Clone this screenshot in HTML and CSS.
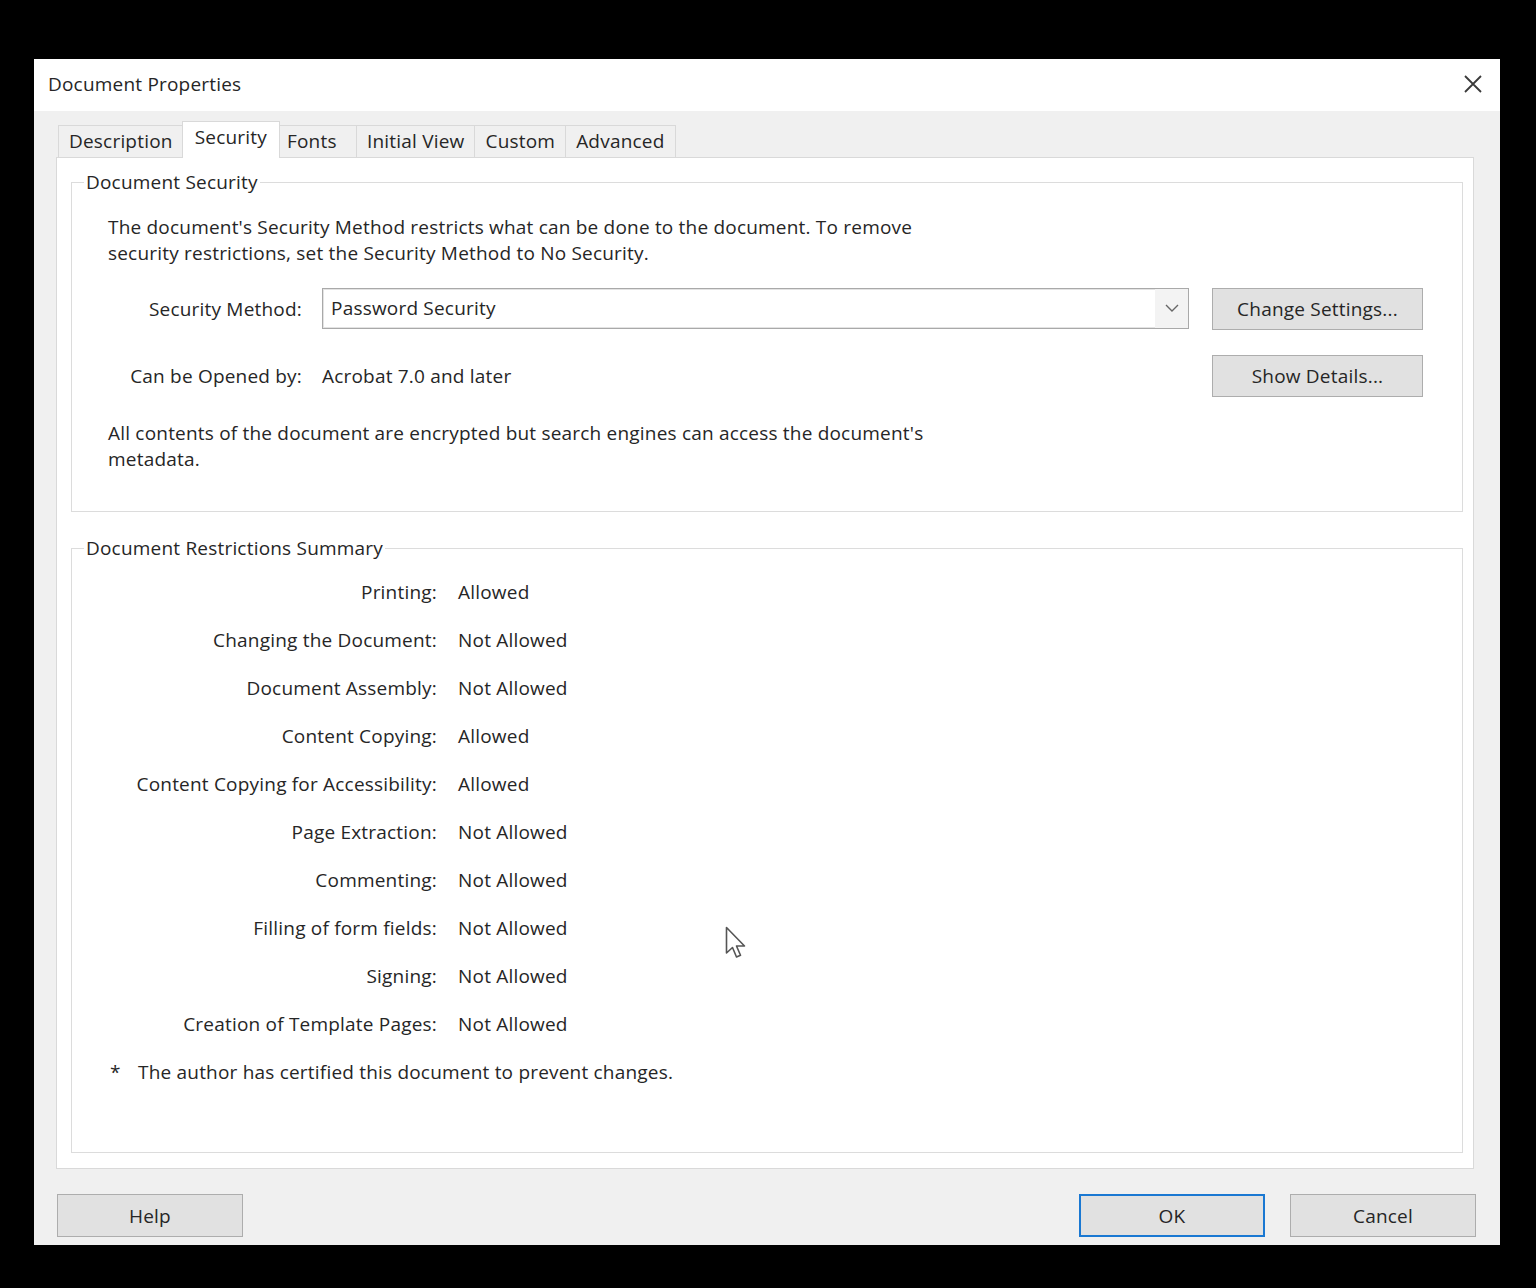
FILE: index.html
```html
<!DOCTYPE html>
<html>
<head>
<meta charset="utf-8">
<title>Document Properties</title>
<link rel="stylesheet" href="styles.css">
</head>
<body>
<div class="dialog">
  <div class="titlebar">
    <span class="title">Document Properties</span>
    <svg class="close" width="20" height="20" viewBox="0 0 20 20"><path d="M2 2 L18 18 M18 2 L2 18" stroke="#3a3a3a" stroke-width="1.8" fill="none"/></svg>
  </div>
  <div class="body">
    <div class="tabs">
      <div class="tab">Description</div>
      <div class="tab active">Security</div>
      <div class="tab fonts">Fonts</div>
      <div class="tab">Initial View</div>
      <div class="tab">Custom</div>
      <div class="tab">Advanced</div>
    </div>
    <div class="panel">
      <fieldset class="group">
        <legend>Document Security</legend>
        <div class="group-inner sec">
          <p class="para">The document's Security Method restricts what can be done to the document. To remove<br>security restrictions, set the Security Method to No Security.</p>
          <div class="row row-method">
            <span class="lbl">Security Method:</span>
            <div class="select">
              <span class="select-text">Password Security</span>
              <span class="select-arrow"><svg width="14" height="8" viewBox="0 0 14 8"><path d="M1 1 L7 7 L13 1" stroke="#666" stroke-width="1.4" fill="none"/></svg></span>
            </div>
            <button class="btn side">Change Settings...</button>
          </div>
          <div class="row row-open">
            <span class="lbl">Can be Opened by:</span>
            <span class="val">Acrobat 7.0 and later</span>
            <button class="btn side">Show Details...</button>
          </div>
          <p class="para para2">All contents of the document are encrypted but search engines can access the document's<br>metadata.</p>
        </div>
      </fieldset>
      <fieldset class="group group2">
        <legend>Document Restrictions Summary</legend>
        <div class="group-inner restr">
          <div class="rrow"><span class="rl">Printing:</span><span class="rv">Allowed</span></div>
          <div class="rrow"><span class="rl">Changing the Document:</span><span class="rv">Not Allowed</span></div>
          <div class="rrow"><span class="rl">Document Assembly:</span><span class="rv">Not Allowed</span></div>
          <div class="rrow"><span class="rl">Content Copying:</span><span class="rv">Allowed</span></div>
          <div class="rrow"><span class="rl">Content Copying for Accessibility:</span><span class="rv">Allowed</span></div>
          <div class="rrow"><span class="rl">Page Extraction:</span><span class="rv">Not Allowed</span></div>
          <div class="rrow"><span class="rl">Commenting:</span><span class="rv">Not Allowed</span></div>
          <div class="rrow"><span class="rl">Filling of form fields:</span><span class="rv">Not Allowed</span></div>
          <div class="rrow"><span class="rl">Signing:</span><span class="rv">Not Allowed</span></div>
          <div class="rrow"><span class="rl">Creation of Template Pages:</span><span class="rv">Not Allowed</span></div>
          <div class="note"><span class="star">*</span><span>The author has certified this document to prevent changes.</span></div>
        </div>
      </fieldset>
    </div>
    <div class="footer">
      <button class="btn foot help">Help</button>
      <div class="footer-right">
        <button class="btn foot ok">OK</button>
        <button class="btn foot">Cancel</button>
      </div>
    </div>
  </div>
</div>
<svg class="cursor" width="26" height="36" viewBox="0 0 26 36"><path d="M1.5 1.5 L1.5 27 L7.5 21.5 L11.5 31 L15.5 29.3 L11.5 20 L19.5 20 Z" fill="#fff" stroke="#555" stroke-width="1.6" stroke-linejoin="round"/></svg>
</body>
</html>
```
FILE: styles.css
```css
* { box-sizing: border-box; }
html, body { margin: 0; padding: 0; }
body {
  background: #000;
  width: 1536px;
  height: 1288px;
  overflow: hidden;
  font-family: "Open Sans", "Noto Sans", sans-serif;
  font-size: 19px;
  letter-spacing: 0.2px;
  color: #262626;
  padding: 59px 0 0 34px;
  position: relative;
}
.dialog {
  width: 1466px;
  height: 1186px;
  background: #f0f0f0;
  display: flex;
  flex-direction: column;
}
.titlebar {
  height: 52px;
  background: #fff;
  display: flex;
  align-items: center;
  justify-content: space-between;
  padding: 0 17px 0 14px;
}
.title { padding-bottom: 2px; }
.close { display: block; margin-top: -2px; }
.body {
  flex: 1;
  display: flex;
  flex-direction: column;
  padding: 10px 26px 0 22px;
}
.tabs {
  display: flex;
  align-items: flex-end;
  height: 36px;
  padding-left: 2px;
  position: relative;
  z-index: 2;
}
.tab {
  height: 32px;
  line-height: 30px;
  padding: 0 10px;
  border: 1px solid #d9d9d9;
  border-bottom: none;
  border-left: none;
  background: #f0f0f0;
}
.tab:first-child { border-left: 1px solid #d9d9d9; }
.tab.fonts { min-width: 79px; padding-left: 9px; }
.tab.active {
  background: #fff;
  border-left: 1px solid #d9d9d9;
  margin: 0 -2px -1px -2px;
  padding: 0 12px;
  height: 37px;
  line-height: 30px;
  position: relative;
}
.panel {
  background: #fff;
  border: 1px solid #d9d9d9;
  height: 1012px;
  padding: 12px 10px 0 14px;
}
.group {
  margin: 0;
  padding: 0;
  border: 1px solid #dcdcdc;
  min-width: 0;
}
.group legend {
  margin-left: 12px;
  padding: 0 2px;
  line-height: 24px;
  height: 24px;
}
.group-inner.sec { padding: 20px 39px 39px 36px; }
.para { margin: 0; line-height: 26px; }
.row { display: flex; align-items: center; }
.row-method { margin-top: 22px; height: 42px; }
.row-open { margin-top: 24px; height: 43px; }
.lbl { width: 194px; text-align: right; margin-right: 20px; flex: none; }
.select {
  flex: 1;
  height: 41px;
  border: 1px solid #a9a9a9;
  box-shadow: inset 0 0 0 1px #e3e3e3;
  background: #fff;
  display: flex;
  align-items: center;
  margin-top: -2px;
}
.select-text { flex: 1; padding-left: 8px; }
.select-arrow {
  width: 33px;
  height: 100%;
  background: #f3f3f3;
  display: flex;
  align-items: center;
  justify-content: center;
}
.select-arrow svg { display: block; }
.val { flex: 1; }
.btn {
  font-family: inherit;
  font-size: 19px;
  letter-spacing: 0.2px;
  color: #262626;
  background: #e1e1e1;
  border: 1px solid #adadad;
  padding: 0;
  margin: 0;
}
.btn.side { width: 211px; height: 42px; margin-left: 23px; flex: none; }
.para2 { margin-top: 23px; }
.group2 { margin-top: 24px; }
.group-inner.restr { padding: 8px 0 56px 36px; }
.rrow { display: flex; height: 48px; align-items: center; }
.rl { width: 329px; text-align: right; margin-right: 21px; flex: none; }
.note { display: flex; height: 48px; align-items: center; }
.star { width: 30px; padding-left: 2px; }
.footer {
  display: flex;
  justify-content: space-between;
  align-items: flex-start;
  padding-top: 25px;
  margin-right: -2px;
}
.footer-right { display: flex; gap: 25px; }
.btn.foot { width: 186px; height: 43px; }
.btn.help { margin-left: 1px; }
.btn.ok { border: 2px solid #1a78d2; }
.cursor { position: absolute; left: 725px; top: 926px; }
```
